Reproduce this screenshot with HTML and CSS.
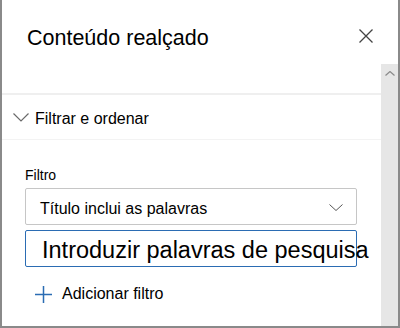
FILE: index.html
```html
<!DOCTYPE html>
<html lang="pt">
<head>
<meta charset="utf-8">
<title>Conteúdo realçado</title>
<link rel="stylesheet" href="styles.css">
</head>
<body>
<div class="panel">
  <header class="panel-header">
    <h1 class="panel-title">Conteúdo realçado</h1>
    <button class="close-btn" aria-label="Fechar">
      <svg width="14" height="14" viewBox="0 0 14 14"><path d="M0.5 0.5 L13.5 13.5 M13.5 0.5 L0.5 13.5" stroke="#444" stroke-width="1.3" fill="none"/></svg>
    </button>
  </header>
  <div class="panel-body">
    <div class="content">
      <div class="spacer"></div>
      <div class="section-head">
        <svg class="chev" width="16" height="9" viewBox="0 0 16 9"><path d="M0.5 0.5 L8 8 L15.5 0.5" stroke="#6a6a6a" stroke-width="1.2" fill="none"/></svg>
        <span class="section-title">Filtrar e ordenar</span>
      </div>
      <div class="form">
        <div class="label">Filtro</div>
        <div class="dropdown">
          <span class="dropdown-text">Título inclui as palavras</span>
          <svg class="dd-chev" width="14" height="7" viewBox="0 0 14 7"><path d="M0.5 0.5 L7 6.5 L13.5 0.5" stroke="#555" stroke-width="1" fill="none"/></svg>
        </div>
        <div class="textbox">Introduzir palavras de pesquisa</div>
        <div class="add-row">
          <svg width="17" height="17" viewBox="0 0 17 17"><path d="M8.5 0 V17 M0 8.5 H17" stroke="#2b6cb3" stroke-width="1.5" fill="none"/></svg>
          <span class="add-text">Adicionar filtro</span>
        </div>
      </div>
    </div>
    <div class="scrollbar">
      <svg class="caret" width="10" height="5" viewBox="0 0 10 5"><path d="M0.5 4.5 L5 0.5 L9.5 4.5" stroke="#8a8a8a" stroke-width="1.2" fill="none"/></svg>
    </div>
  </div>
</div>
</body>
</html>
```
FILE: styles.css
```css
* { box-sizing: border-box; }
html, body { margin: 0; padding: 0; background: #fff; }
body { font-family: "Liberation Sans", Arial, sans-serif; color: #000; }

.panel {
  width: 400px;
  height: 328px;
  border-left: 2px solid #8a8a8a;
  border-right: 2px solid #8a8a8a;
  border-bottom: 2px solid #8a8a8a;
  display: flex;
  flex-direction: column;
  overflow: hidden;
}

.panel-header {
  height: 64px;
  flex: none;
  display: flex;
  justify-content: space-between;
  align-items: flex-start;
  padding: 24px 25px 0 25px;
}
.panel-title {
  margin: 0;
  font-size: 21.5px;
  font-weight: normal;
  line-height: 28px;
}
.close-btn {
  border: 0;
  background: none;
  padding: 0;
  margin-top: 5px;
  width: 14px;
  height: 14px;
  display: block;
}
.close-btn svg { display: block; }

.panel-body {
  flex: 1;
  display: flex;
  min-height: 0;
}
.content {
  flex: 1;
  min-width: 0;
}
.spacer {
  height: 31px;
  border-bottom: 2px solid #efefef;
}
.section-head {
  height: 45px;
  display: flex;
  align-items: center;
  padding-left: 11px;
  padding-top: 4px;
  border-bottom: 1px solid #f3f3f3;
}
.chev { display: block; margin-top: -4px; }
.section-title {
  margin-left: 6px;
  font-size: 16px;
  line-height: 20px;
}

.form {
  padding: 25px 0 0 23px;
}
.label {
  font-size: 14px;
  line-height: 20px;
  margin-bottom: 3px;
}
.dropdown {
  width: 332px;
  height: 37px;
  border: 1px solid #c6c6c6;
  border-radius: 2px;
  display: flex;
  justify-content: space-between;
  align-items: center;
  padding: 0 13px 0 14px;
}
.dropdown-text {
  font-size: 16px;
  line-height: 31px;
  padding-top: 4px;
}
.dd-chev { display: block; margin-top: 2px; }

.textbox {
  margin-top: 5px;
  width: 332px;
  height: 37px;
  border: 1px solid #2b6cb3;
  border-radius: 2px;
  padding: 3px 0 0 16px;
  font-size: 23.5px;
  line-height: 32px;
  white-space: nowrap;
  overflow: visible;
}

.add-row {
  margin-top: 11px;
  height: 32px;
  display: flex;
  align-items: center;
  padding-left: 10px;
  gap: 10px;
}
.add-row svg { display: block; }
.add-text {
  font-size: 16px;
  line-height: 32px;
}

.scrollbar {
  width: 17px;
  flex: none;
  background: #e6e6e6;
  display: flex;
  justify-content: center;
  align-items: flex-start;
  padding-top: 7px;
}
.caret { display: block; }
```
